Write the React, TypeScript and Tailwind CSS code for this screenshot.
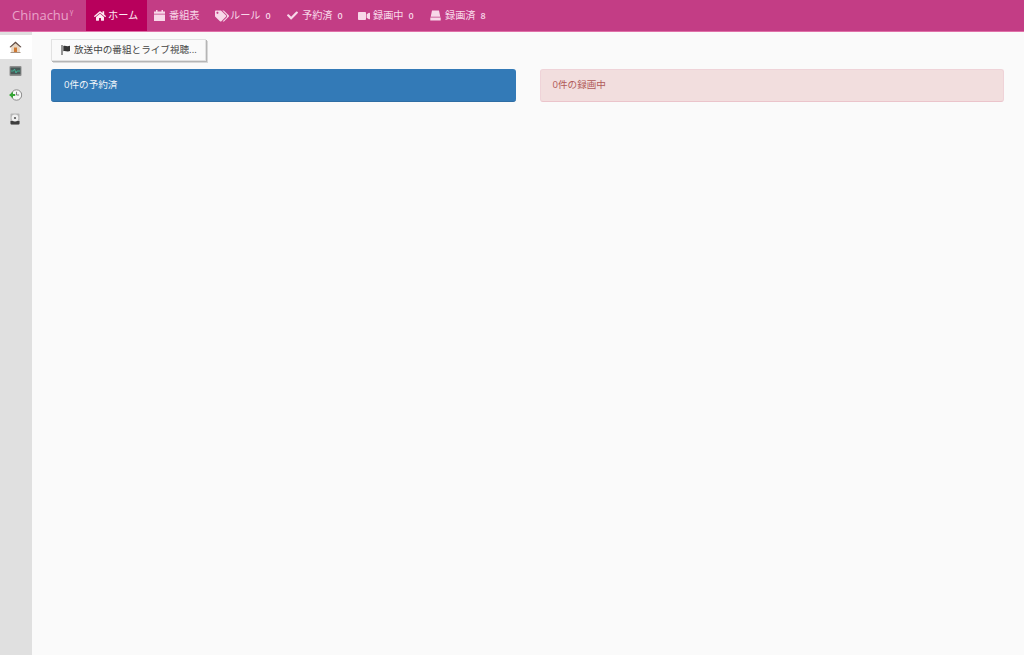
import { FaCheck, FaHome, FaTags, FaVideo } from "react-icons/fa";
import type { ReactNode } from "react";

const FONT = "font-['Open_Sans','Noto_Sans_CJK_JP',sans-serif]";

type NavItemProps = {
  icon: ReactNode;
  label: string;
  count?: number;
  active?: boolean;
  className?: string;
};

const NavItem = ({ icon, label, count, active, className }: NavItemProps) => (
  <div
    className={`flex h-[31px] items-center whitespace-nowrap text-[10.2px] ${active ? "bg-[#b8005c] text-[#fdeaf3]" : "text-[#f8d8e9]"} ${className ?? ""}`}
  >
    {icon}
    <span>{label}</span>
    {count !== undefined && <span className="ml-[5px] text-[9px] font-semibold">{count}</span>}
  </div>
);

const SideIcon = ({ children, active }: { children: ReactNode; active?: boolean }) => (
  <div className={`flex h-[24px] items-center justify-center ${active ? "bg-white" : ""}`}>{children}</div>
);

const App = () => {
  return (
    <div className={`flex h-[655px] w-[1024px] flex-col overflow-hidden bg-[#fafafa] ${FONT}`}>
      <header className="flex h-[32px] shrink-0 items-start border-b border-[#e070a8] bg-[#c33d85]">
        <div className="flex h-[31px] w-[86px] items-center pl-[12px] text-[13px] text-[#e9a3c9]">
          Chinachu<sup className="ml-[1px] text-[7px]">γ</sup>
        </div>
        <NavItem
          active
          icon={<FaHome size={12} className="mr-[2px]" />}
          label="ホーム"
          className="w-[61px] pl-[8px]"
        />
        <NavItem
          icon={
            <svg width="11" height="11" viewBox="0 0 11 11" className="mr-[4px]" fill="currentColor">
              <path d="M2 0h1.5v1.5H7.5V0H9v1.5h2v2.3H0V1.5h2zM0 4.6h11V11H0z" />
            </svg>
          }
          label="番組表"
          className="w-[61px] pl-[7px]"
        />
        <NavItem icon={<FaTags size={14} className="mr-[1px]" />} label="ルール" count={0} className="w-[71px] pl-[7px]" />
        <NavItem icon={<FaCheck size={11} className="mr-[4px]" />} label="予約済" count={0} className="w-[71px] pl-[8px]" />
        <NavItem icon={<FaVideo size={12} className="mr-[3px]" />} label="録画中" count={0} className="w-[72px] pl-[8px]" />
        <NavItem
          icon={
            <svg width="11" height="11" viewBox="0 0 11 11" className="mr-[4px]" fill="currentColor">
              <path d="M2 0.5h7l1.3 6.3H0.7zM0.3 7.6h10.4V10.5H0.3z" />
            </svg>
          }
          label="録画済"
          count={8}
          className="pl-[8px]"
        />
      </header>
      <div className="flex min-h-0 flex-1">
        <aside className="w-[32px] shrink-0 bg-[#e0e0e0] pt-[3px]">
          <SideIcon active>
            <svg width="13" height="12" viewBox="0 0 13 12" className="-translate-x-[1px]">
              <path d="M2.2 5.5 6.5 1.8l4.3 3.7V11H2.2z" fill="#e8d6c2" />
              <path d="M6.5 0.5 0.5 6l1 0.6 5-4.4 5 4.4 1-0.6z" fill="#5f4a42" />
              <rect x="5" y="6.5" width="3" height="4.5" fill="#d07a34" />
              <rect x="1.5" y="11" width="10" height="1" fill="#a89484" />
            </svg>
          </SideIcon>
          <SideIcon>
            <svg width="13" height="12" viewBox="0 0 13 12" className="-translate-x-[1px]">
              <rect x="0.5" y="1" width="12" height="10" rx="1" fill="#8f8f8f" />
              <rect x="1.5" y="2.5" width="10" height="6.8" fill="#4a5a58" />
              <path d="M2 6h2.5l1-2 1.5 4 1-2h3" stroke="#3fc0a0" strokeWidth="0.8" fill="none" />
            </svg>
          </SideIcon>
          <SideIcon>
            <svg width="14" height="14" viewBox="0 0 14 14" className="-translate-x-[0.5px]">
              <circle cx="8" cy="7" r="5.2" fill="#f6f6f6" stroke="#8a8a8a" strokeWidth="1" />
              <path d="M8 3.8V7h2.6" stroke="#666" strokeWidth="0.8" fill="none" />
              <path d="M0.5 7 4.5 3.8V6h2.2v2H4.5v2.2z" fill="#35a535" />
            </svg>
          </SideIcon>
          <SideIcon>
            <svg width="10" height="12" viewBox="0 0 10 12" className="-translate-x-[1px]">
              <rect x="0.5" y="0.5" width="9" height="11" rx="1" fill="#b5b5b5" />
              <path d="M0.5 8h9v2.5a1 1 0 0 1-1 1h-7a1 1 0 0 1-1-1z" fill="#3d3d3d" />
              <circle cx="5" cy="5" r="3.4" fill="#f0f0f0" />
              <circle cx="5" cy="5" r="1.1" fill="#555" />
            </svg>
          </SideIcon>
        </aside>
        <main className="min-w-0 flex-1 pl-[19px] pr-[20px] pt-[7px]">
          <button className="flex h-[22px] w-[155px] items-center whitespace-nowrap border border-[#e2e2e2] bg-[#fafafa] pl-[9px] text-[9.6px] text-[#444] shadow-[1px_1px_0_#b5b5b5,2px_2px_0_#d8d8d8]">
            <svg width="10" height="10" viewBox="0 0 10 10" className="mr-[3px]" fill="#333">
              <path d="M0.5 0h1v10h-1zM2.3 1c2-1 3.5 1 6.7-0.3v5.3c-3 1.2-4.7-0.8-6.7 0.2z" />
            </svg>
            放送中の番組とライブ視聴...
          </button>
          <div className="mt-[8px] grid grid-cols-2 gap-[24px]">
            <div className="flex h-[33px] items-center rounded-[3px] border-b border-[#2e6da4] bg-[#337ab7] pl-[13px] text-[9.6px] text-[#f2f6fa]">
              0件の予約済
            </div>
            <div className="flex h-[33px] items-center rounded-[3px] border border-[#efd3d8] border-b-[#ebc4cb] bg-[#f2dede] pl-[12px] text-[9.6px] text-[#b05a58]">
              0件の録画中
            </div>
          </div>
        </main>
      </div>
    </div>
  );
};

export default App;
